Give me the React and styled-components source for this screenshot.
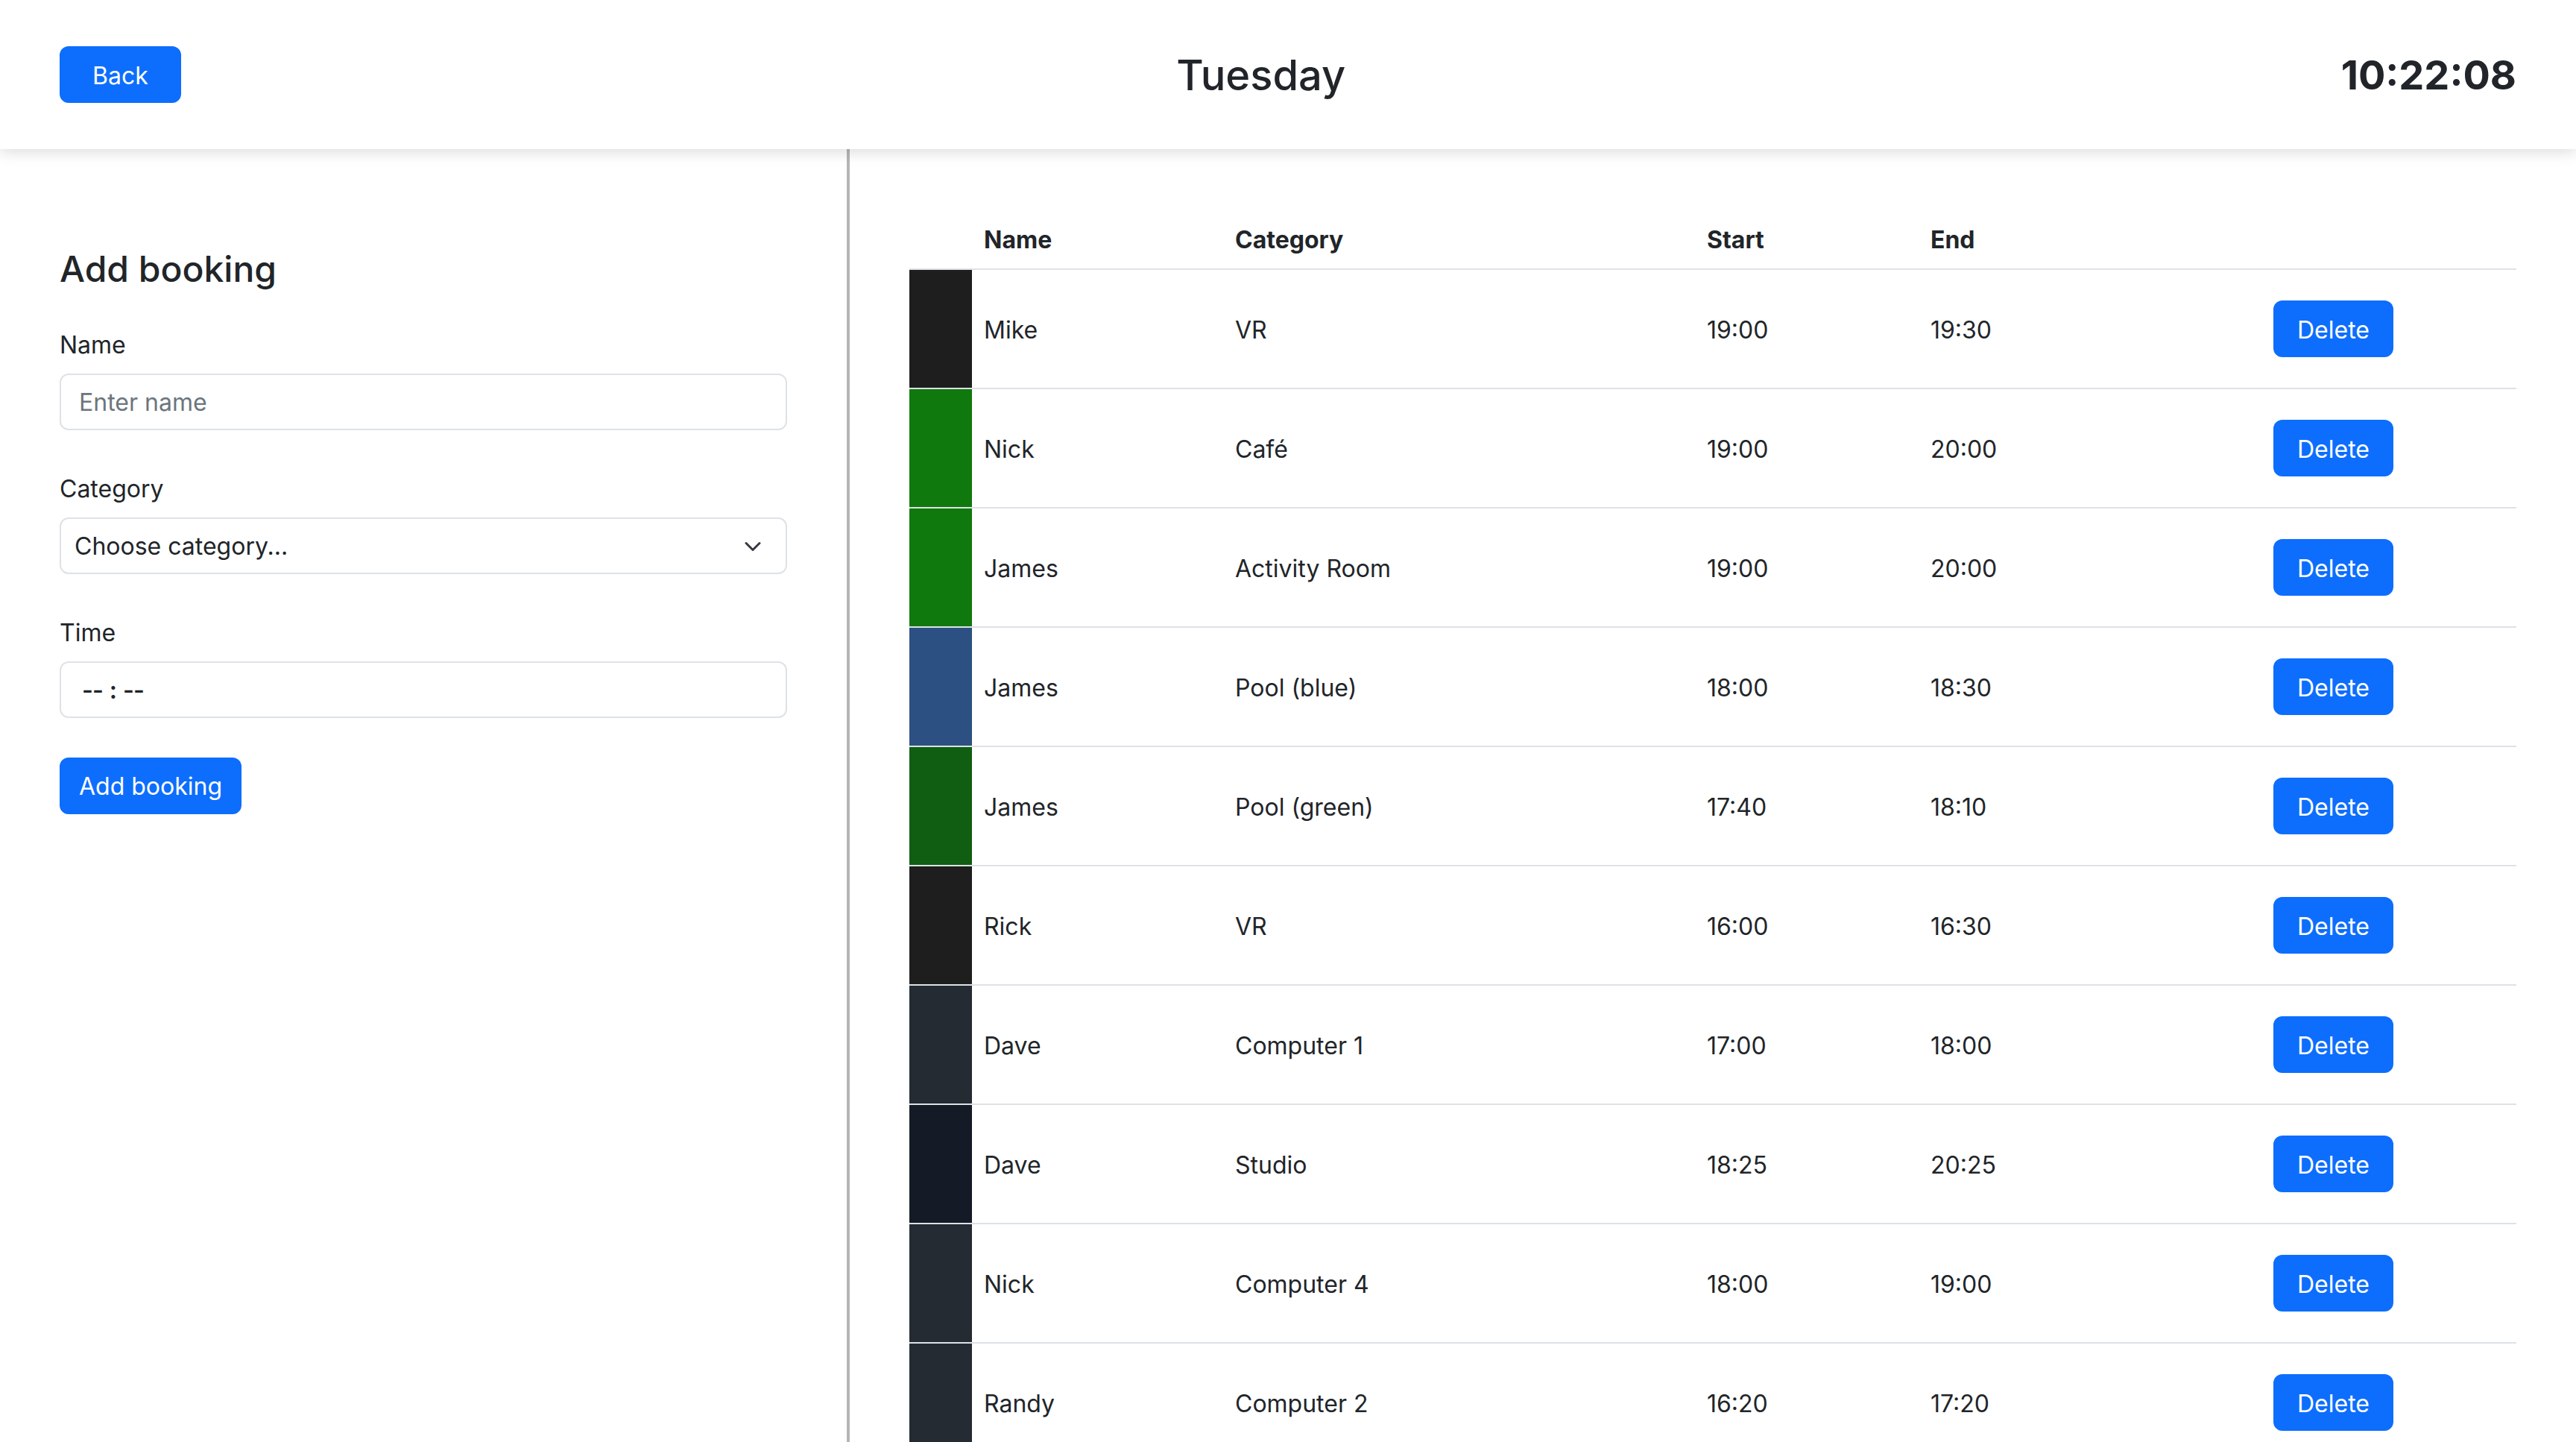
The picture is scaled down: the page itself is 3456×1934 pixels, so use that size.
import React from 'react';
import styled, { createGlobalStyle } from 'styled-components';

const bookings = [
	{ id: 1, name: 'Mike', category: 'VR', start: '19:00', end: '19:30', color: '#1e1e1e' },
	{ id: 2, name: 'Nick', category: 'Café', start: '19:00', end: '20:00', color: '#10790e' },
	{ id: 3, name: 'James', category: 'Activity Room', start: '19:00', end: '20:00', color: '#10790e' },
	{ id: 4, name: 'James', category: 'Pool (blue)', start: '18:00', end: '18:30', color: '#2c5081' },
	{ id: 5, name: 'James', category: 'Pool (green)', start: '17:40', end: '18:10', color: '#0f5e12' },
	{ id: 6, name: 'Rick', category: 'VR', start: '16:00', end: '16:30', color: '#1e1e1e' },
	{ id: 7, name: 'Dave', category: 'Computer 1', start: '17:00', end: '18:00', color: '#242b32' },
	{ id: 8, name: 'Dave', category: 'Studio', start: '18:25', end: '20:25', color: '#141b26' },
	{ id: 9, name: 'Nick', category: 'Computer 4', start: '18:00', end: '19:00', color: '#242b32' },
	{ id: 10, name: 'Randy', category: 'Computer 2', start: '16:20', end: '17:20', color: '#242b32' },
];

const GlobalStyle = createGlobalStyle`
	* {
		box-sizing: border-box;
	}
	body {
		margin: 0;
		font-family: Inter, 'Liberation Sans', sans-serif;
		font-size: 32px;
		line-height: 1.5;
		color: #212529;
		background: #fff;
	}
`;

const App = () => {
	return (
		<>
			<GlobalStyle />
			<Header>
				<Button $px={42}>Back</Button>
				<Day>Tuesday</Day>
				<Clock>10:22:08</Clock>
			</Header>
			<Main>
				<FormPanel>
					<FormTitle>Add booking</FormTitle>
					<Group>
						<Label>Name</Label>
						<Field>
							<Placeholder>Enter name</Placeholder>
						</Field>
					</Group>
					<Group>
						<Label>Category</Label>
						<Field $select>
							<span>Choose category...</span>
							<svg width='24' height='24' viewBox='0 0 16 16' fill='none'>
								<path
									d='m2 5 6 6 6-6'
									stroke='#343a40'
									strokeWidth='2'
									strokeLinecap='round'
									strokeLinejoin='round'
								/>
							</svg>
						</Field>
					</Group>
					<Group>
						<Label>Time</Label>
						<Field $time>
							<TimeText>-- : --</TimeText>
						</Field>
					</Group>
					<Button $px={24}>Add booking</Button>
				</FormPanel>
				<ListPanel>
					<HeadRow>
						<span />
						<HeadCell>Name</HeadCell>
						<HeadCell>Category</HeadCell>
						<HeadCell>Start</HeadCell>
						<HeadCell>End</HeadCell>
						<span />
					</HeadRow>
					{bookings.map((b) => (
						<Row key={b.id}>
							<Strip $color={b.color} />
							<Cell>{b.name}</Cell>
							<Cell>{b.category}</Cell>
							<Cell>{b.start}</Cell>
							<Cell>{b.end}</Cell>
							<Cell>
								<Button $px={30}>Delete</Button>
							</Cell>
						</Row>
					))}
				</ListPanel>
			</Main>
		</>
	);
};

const Header = styled.header`
	position: relative;
	z-index: 2;
	height: 200px;
	padding: 0 80px;
	display: flex;
	justify-content: space-between;
	align-items: center;
	background: #fff;
	box-shadow: 0 4px 18px rgba(0, 0, 0, 0.14);
`;

const Day = styled.h3`
	margin: 0;
	padding-top: 3px;
	font-size: 56px;
	font-weight: 500;
	line-height: 1.2;
`;

const Clock = styled.div`
	padding-top: 3px;
	font-size: 54px;
	font-weight: 700;
	line-height: 1.2;
`;

const Button = styled.button`
	height: 76px;
	padding: 3px ${(p) => p.$px}px 0;
	border: 2px solid #0d6efd;
	border-radius: 12px;
	background: #0d6efd;
	color: #fff;
	font-family: inherit;
	font-size: 32px;
	line-height: 1.5;
	cursor: pointer;
`;

const Main = styled.main`
	display: flex;
	min-height: calc(100vh - 200px);
`;

const FormPanel = styled.section`
	flex: 0 0 1140px;
	padding: 80px;
	border-right: 4px solid #b5b5b5;
`;

const FormTitle = styled.h4`
	margin: 52px 0 47px;
	font-size: 48px;
	font-weight: 500;
	line-height: 1.2;
`;

const Group = styled.div`
	margin-bottom: 53px;
`;

const Label = styled.label`
	display: block;
	padding-top: 2px;
	margin-bottom: 14px;
	line-height: 48px;
`;

const Field = styled.div`
	height: 76px;
	display: flex;
	align-items: center;
	justify-content: space-between;
	padding: ${(p) => (p.$select ? '2px 32px 0 18px' : p.$time ? '2px 28px 0' : '2px 24px 0')};
	border: 2px solid #dee2e6;
	border-radius: 12px;
	background: #fff;
	color: #212529;
`;

const Placeholder = styled.span`
	color: #6c757d;
`;

const TimeText = styled.span`
	font-weight: 600;
	letter-spacing: -1px;
	word-spacing: 2px;
`;

const ListPanel = styled.section`
	flex: 1;
	padding: 80px 80px 0;
`;

const columns = '84px 337px 633px 300px 460px 1fr';

const HeadRow = styled.div`
	display: grid;
	grid-template-columns: ${columns};
	height: 82px;
	align-items: center;
	border-bottom: 2px solid #dee2e6;
`;

const HeadCell = styled.div`
	padding: 3px 16px 0;
	font-weight: 700;
`;

const Row = styled.div`
	display: grid;
	grid-template-columns: ${columns};
	height: 160px;
	border-bottom: 2px solid #dee2e6;
`;

const Strip = styled.div`
	background: ${(p) => p.$color};
`;

const Cell = styled.div`
	display: flex;
	align-items: center;
	padding: 3px 16px 0;

	button {
		margin-top: -3px;
	}
`;

export default App;
